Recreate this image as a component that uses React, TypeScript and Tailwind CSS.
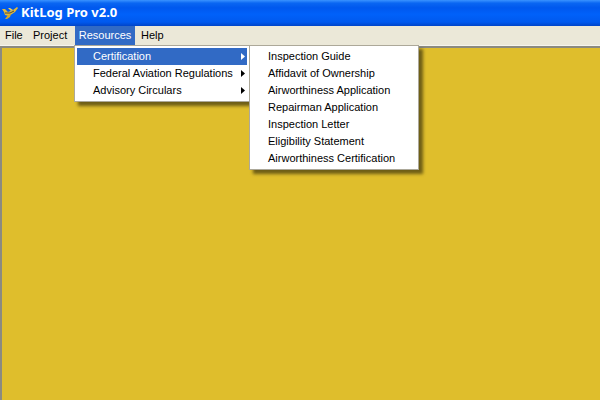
const RESOURCES = [
  { label: 'Certification', active: true },
  { label: 'Federal Aviation Regulations', active: false },
  { label: 'Advisory Circulars', active: false },
]

const CERTIFICATION = [
  'Inspection Guide',
  'Affidavit of Ownership',
  'Airworthiness Application',
  'Repairman Application',
  'Inspection Letter',
  'Eligibility Statement',
  'Airworthiness Certification',
]

function PlaneIcon() {
  return (
    <svg width="16" height="12" viewBox="0 0 16 12" className="mt-[-1px] shrink-0">
      <path d="M0 2 L3 2 L6 5 L11 3 L15 0 L16 1 L13 5 L10 7 L7 9 L3 8 L2 5 Z" fill="#e2b93a" />
      <path d="M6 8 L9 7 L8 10 L5 12 L3 12 Z" fill="#d4a92c" />
      <path d="M9 4 L6 1 L8 1 L11 3 Z" fill="#f2d050" />
      <path d="M3 6 L8 6 L12 4" stroke="#4a4a48" strokeWidth="1" fill="none" />
    </svg>
  )
}

function Arrow({ color }: { color: string }) {
  return (
    <svg width="4" height="7" viewBox="0 0 4 7" className="shrink-0">
      <path d="M0 0 L4 3.5 L0 7 Z" fill={color} />
    </svg>
  )
}

export default function App() {
  return (
    <div className="relative flex h-[400px] w-[600px] flex-col overflow-hidden bg-[#dfbe2c] font-['Liberation_Sans',sans-serif] text-[11px] text-black">
      {/* Title bar */}
      <div className="flex h-[26px] items-center gap-[3px] bg-[linear-gradient(to_bottom,#3a93ff_0%,#0a66f2_12%,#0058ee_30%,#0061fa_55%,#0059ee_85%,#0044c8_100%)] pl-[2px]">
        <PlaneIcon />
        <span className="font-['Noto_Sans',sans-serif] text-[13px] font-bold text-white">KitLog Pro v2.0</span>
      </div>

      {/* Menu bar */}
      <div className="flex h-[19px] bg-[#ebe8d8]">
        <div className="flex w-[28px] items-center pl-[5px]">File</div>
        <div className="flex w-[47px] items-center pl-[5px]">Project</div>
        <div className="flex w-[60px] items-center justify-center bg-[#316ac5] text-white">Resources</div>
        <div className="flex items-center px-[6px]">Help</div>
      </div>
      <div className="h-px bg-[#f6f5ee]" />
      <div className="h-[2px] bg-[#8b8a80]" />

      {/* Workspace */}
      <div className="flex-1 border-l-2 border-[#8b8a80] bg-[#dfbe2c]" />

      {/* Resources menu */}
      <div className="absolute top-[45px] left-[74px] w-[176px] border border-[#aca899] bg-white p-[2px] shadow-[4px_4px_3px_rgba(0,0,0,0.5)]">
        {RESOURCES.map(item => (
          <div
            key={item.label}
            className={item.active ? 'flex h-[17px] items-center justify-between bg-[#316ac5] pr-[2px] pl-[16px] text-white' : 'flex h-[17px] items-center justify-between pr-[2px] pl-[16px]'}
          >
            <span>{item.label}</span>
            <Arrow color={item.active ? '#ffffff' : '#000000'} />
          </div>
        ))}
      </div>

      {/* Certification submenu */}
      <div className="absolute top-[45px] left-[249px] w-[170px] border border-[#aca899] bg-white py-[2px] pl-[18px] shadow-[4px_4px_3px_rgba(0,0,0,0.5)]">
        {CERTIFICATION.map(item => (
          <div key={item} className="flex h-[17px] items-center">{item}</div>
        ))}
      </div>
    </div>
  )
}
